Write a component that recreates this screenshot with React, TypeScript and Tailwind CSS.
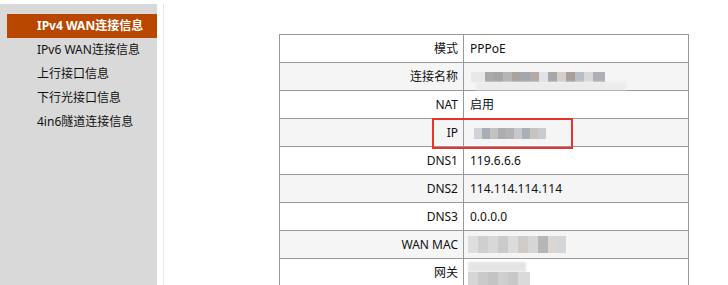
import React from "react";

const font = { fontFamily: '"Noto Sans", "Noto Sans CJK SC", sans-serif' };

function Block({ c, w = "w-[9px]" }: { c: string; w?: string }) {
  return <div className={`h-full ${w} ${c}`} />;
}

export default function App() {
  const menu = ["IPv6 WAN连接信息", "上行接口信息", "下行光接口信息", "4in6隧道连接信息"];
  return (
    <div className="w-[728px] h-[285px] bg-white flex pt-[4px] text-[12px] text-[#111] overflow-hidden" style={font}>
      <div className="w-[157px] h-[281px] bg-[#d9d9d9] pt-[10px] shrink-0">
        <div className="ml-[7px] h-[24px] bg-[#b94700] text-white font-bold pl-[30px] flex items-center">IPv4 WAN连接信息</div>
        {menu.map((m) => (
          <div key={m} className="ml-[7px] h-[24px] pl-[30px] flex items-center">{m}</div>
        ))}
      </div>
      <div className="ml-[6px] w-px h-[281px] bg-[#e6e6e6] shrink-0" />
      <div className="pl-[115px] pt-[30px]">
        <div className="relative">
          <table className="border-collapse w-[410px]">
            <tbody>
              <tr className="h-[28px]">
                <td className="w-[184px] border border-[#999] text-right pr-[5px]">模式</td>
                <td className="border border-[#999] pl-[6px]">PPPoE</td>
              </tr>
              <tr className="h-[28px] bg-[#f5f5f5]">
                <td className="border border-[#999] text-right pr-[5px]">连接名称</td>
                <td className="border border-[#999] pl-[4px]">
                  <div className="relative h-[26px]">
                    <div className="absolute left-[3px] top-[8px] h-[10px] flex blur-[0.3px]">
                      <Block c="bg-[#e6e8ea]" w="w-[14px]" />
                      <Block c="bg-[#a9a9a9]" />
                      <Block c="bg-[#a6a4a4]" />
                      <Block c="bg-[#b5b5b5]" />
                      <Block c="bg-[#aaa39c]" />
                      <Block c="bg-[#a2a7ad]" />
                      <Block c="bg-[#b3aaa5]" />
                      <Block c="bg-[#dde3e8]" />
                      <Block c="bg-[#a7a7a7]" />
                      <Block c="bg-[#d2cfcc]" />
                      <Block c="bg-[#ab9f9a]" />
                      <Block c="bg-[#b9bec6]" />
                      <Block c="bg-[#d8d8d8]" />
                      <Block c="bg-[#aeb0b3]" w="w-[12px]" />
                    </div>
                    <div className="absolute left-[8px] top-[18px] w-[150px] h-[8px] bg-[#ececec] blur-[1px]" />
                  </div>
                </td>
              </tr>
              <tr className="h-[28px]">
                <td className="border border-[#999] text-right pr-[5px]">NAT</td>
                <td className="border border-[#999] pl-[6px]">启用</td>
              </tr>
              <tr className="h-[28px] bg-[#f5f5f5]">
                <td className="border border-[#999] text-right pr-[5px]">IP</td>
                <td className="border border-[#999] pl-[4px]">
                  <div className="relative h-[26px]">
                    <div className="absolute left-[6px] top-[8px] h-[11px] flex blur-[0.4px]">
                      <Block c="bg-[#cfd3d8]" w="w-[8px]" />
                      <Block c="bg-[#a8adb5]" w="w-[8px]" />
                      <Block c="bg-[#c4c1c1]" w="w-[8px]" />
                      <Block c="bg-[#adadb2]" w="w-[8px]" />
                      <Block c="bg-[#b3b2b4]" w="w-[8px]" />
                      <Block c="bg-[#c7c8cc]" w="w-[8px]" />
                      <Block c="bg-[#aab0b7]" w="w-[8px]" />
                      <Block c="bg-[#c8c3bf]" w="w-[8px]" />
                      <Block c="bg-[#c8ccd2]" w="w-[8px]" />
                    </div>
                  </div>
                </td>
              </tr>
              <tr className="h-[28px]">
                <td className="border border-[#999] text-right pr-[5px]">DNS1</td>
                <td className="border border-[#999] pl-[6px]">119.6.6.6</td>
              </tr>
              <tr className="h-[28px] bg-[#f5f5f5]">
                <td className="border border-[#999] text-right pr-[5px]">DNS2</td>
                <td className="border border-[#999] pl-[6px]">114.114.114.114</td>
              </tr>
              <tr className="h-[28px]">
                <td className="border border-[#999] text-right pr-[5px]">DNS3</td>
                <td className="border border-[#999] pl-[6px]">0.0.0.0</td>
              </tr>
              <tr className="h-[28px] bg-[#f5f5f5]">
                <td className="border border-[#999] text-right pr-[5px]">WAN MAC</td>
                <td className="border border-[#999] pl-[2px]">
                  <div className="relative h-[26px]">
                    <div className="absolute left-[2px] top-[4px] h-[17px] flex blur-[0.6px]">
                      <Block c="bg-[#dedede]" w="w-[10px]" />
                      <Block c="bg-[#cfcfcf]" w="w-[10px]" />
                      <Block c="bg-[#d8d8d8]" w="w-[10px]" />
                      <Block c="bg-[#c9cbcd]" w="w-[10px]" />
                      <Block c="bg-[#dcdcdc]" w="w-[10px]" />
                      <Block c="bg-[#cfcbc8]" w="w-[10px]" />
                      <Block c="bg-[#d6d6d6]" w="w-[10px]" />
                      <Block c="bg-[#b6b6b6]" w="w-[10px]" />
                      <Block c="bg-[#d9d6d3]" w="w-[10px]" />
                      <Block c="bg-[#d3d6d9]" w="w-[8px]" />
                    </div>
                  </div>
                </td>
              </tr>
              <tr className="h-[28px]">
                <td className="border border-[#999] text-right pr-[5px]">网关</td>
                <td className="border border-[#999] pl-[2px]">
                  <div className="relative h-[26px]">
                    <div className="absolute left-[2px] top-[2px] h-[10px] w-[58px] bg-[#e4e4e4] blur-[1px]" />
                    <div className="absolute left-[2px] top-[12px] h-[14px] flex blur-[0.6px]">
                      <Block c="bg-[#d6d6d6]" w="w-[10px]" />
                      <Block c="bg-[#c9cacc]" w="w-[10px]" />
                      <Block c="bg-[#c3c3c3]" w="w-[10px]" />
                      <Block c="bg-[#cfcfcf]" w="w-[10px]" />
                      <Block c="bg-[#c6c8ca]" w="w-[10px]" />
                      <Block c="bg-[#dadada]" w="w-[12px]" />
                    </div>
                  </div>
                </td>
              </tr>
            </tbody>
          </table>
          <div className="absolute left-[153px] top-[84px] w-[141px] h-[31px] border-2 border-[#e8322d]" />
        </div>
      </div>
    </div>
  );
}
